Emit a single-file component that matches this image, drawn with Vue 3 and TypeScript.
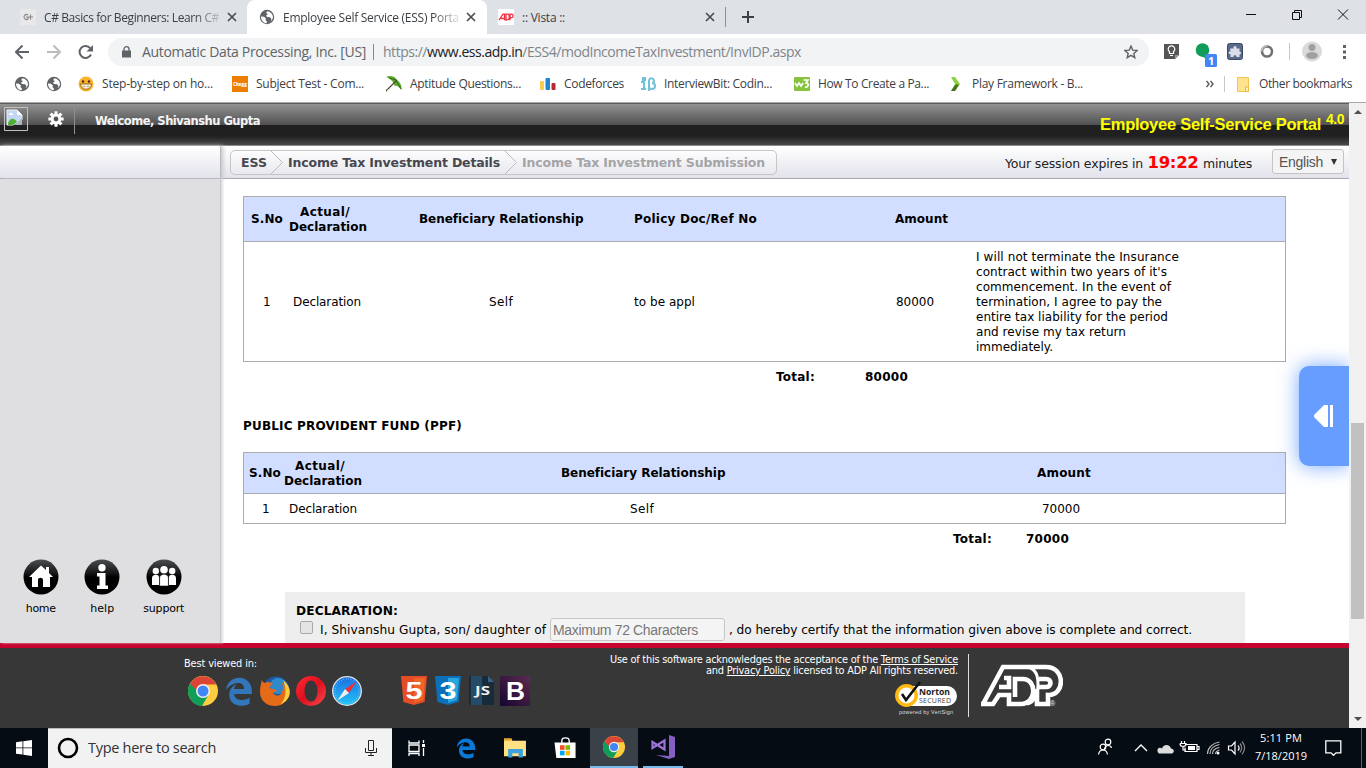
<script setup lang="ts">
import type { Directive } from 'vue'

// Tunes letter spacing so that a label occupies the given width in pixels.
const vFit: Directive<HTMLElement, number> = {
  mounted(el, { value }) {
    const count = (el.textContent ?? '').trim().length
    const natural = el.getBoundingClientRect().width
    if (count > 0) el.style.letterSpacing = `${((value - natural) / count).toFixed(3)}px`
  },
}

interface Cell { text: string; width: number }
interface Bookmark { name: string; icon: string; width: number; short?: boolean }

const bookmarks: Bookmark[] = [
  { name: 'Step-by-step on ho...', icon: 'smile', width: 111 },
  { name: 'Subject Test - Com...', icon: 'chegg', width: 108 },
  { name: 'Aptitude Questions...', icon: 'umbrella', width: 111 },
  { name: 'Codeforces', icon: 'bars', width: 60, short: true },
  { name: 'InterviewBit: Codin...', icon: 'ib', width: 108 },
  { name: 'How To Create a Pa...', icon: 'w3', width: 111 },
  { name: 'Play Framework - B...', icon: 'play', width: 111 },
]

const insuranceRow: Cell[] = [
  { text: '1', width: 7 },
  { text: 'Declaration', width: 68 },
  { text: 'Self', width: 24 },
  { text: 'to be appl', width: 61 },
  { text: '80000', width: 38 },
]

const undertaking: Cell[] = [
  { text: 'I will not terminate the Insurance', width: 203 },
  { text: "contract within two years of it's", width: 191 },
  { text: 'commencement. In the event of', width: 195 },
  { text: 'termination, I agree to pay the', width: 186 },
  { text: 'entire tax liability for the period', width: 192 },
  { text: 'and revise my tax return', width: 150 },
  { text: 'immediately.', width: 77 },
]

const ppfRow: Cell[] = [
  { text: '1', width: 7 },
  { text: 'Declaration', width: 68 },
  { text: 'Self', width: 24 },
  { text: '70000', width: 38 },
]
</script>

<template>
  <div class="screen">
    <svg class="defs" width="0" height="0">
      <defs>
        <symbol id="globe" viewBox="0 0 16 16">
          <circle cx="8" cy="8" r="7.2" fill="#5f6368" />
          <path d="M2 7.5l3 .3 2 1.6-.6 1.6 1.4 1.2v2C4.500 14 2 11.500 2 7.500zM8.200 2.200l-1 1.800 1.800 1.300-2 1.300 1 1.400 3 .2 1.500 1.700-1 2.300c1.800-1.200 2.700-3 2.400-5-.4-2.500-2.700-4.700-5.700-5z" fill="#fff" />
        </symbol>
        <symbol id="cross" viewBox="0 0 10 10"><path d="M1 1l8 8M9 1l-8 8" stroke="#4a4d51" stroke-width="1.7" fill="none" /></symbol>
        <symbol id="chrome" viewBox="0 0 30 30">
          <circle cx="15" cy="15" r="15" fill="#ffcd40" />
          <path d="M15 15L2 7.500A15 15 0 0 0 14 30l7-12z" fill="#0f9d58" />
          <path d="M15 15H9L2 7.500A15 15 0 0 1 28.300 8.500H15z" fill="#db4437" />
          <circle cx="15" cy="15" r="7" fill="#f1f1f1" /><circle cx="15" cy="15" r="5.500" fill="#4285f4" />
        </symbol>
        <symbol id="edge" viewBox="2 1 20 21">
          <path d="M2.740 10.810C3.830-1.360 22.500-1.360 21.200 13.560H8.610C8.610 17.850 14.420 19.210 19.540 16.310V20.530C13.250 23.880 5 21.430 5 14.090C5 8.580 9.970 6.810 9.970 6.810C9.970 6.810 8.580 8.580 8.540 10.050H15.700C15.700 2.930 5.900 5.570 2.740 10.810Z" fill="currentColor" />
        </symbol>
        <linearGradient id="gloss" x1="0" y1="0" x2="0" y2="1"><stop offset="0" stop-color="#4b4f52" /><stop offset=".42" stop-color="#111" /><stop offset=".5" stop-color="#000" /></linearGradient>
        <linearGradient id="operaRed" x1="0" y1="0" x2="1" y2="1"><stop offset="0" stop-color="#ff2a36" /><stop offset=".5" stop-color="#e00f1d" /><stop offset="1" stop-color="#f24e4e" /></linearGradient>
        <linearGradient id="sky" x1="0" y1="0" x2="0" y2="1"><stop offset="0" stop-color="#1d6fe3" /><stop offset="1" stop-color="#20c4f5" /></linearGradient>
        <linearGradient id="plum" x1="0" y1="1" x2="1" y2="0"><stop offset="0" stop-color="#14062f" /><stop offset="1" stop-color="#5d2a52" /></linearGradient>
      </defs>
    </svg>

    <header class="tabs">
      <div class="tab first">
        <svg class="fav" viewBox="0 0 16 16"><path d="M0 0h16v16H0z" fill="#e8e8e8" /><path d="M8 6a2.500 2.500 0 1 0 0 4V8H6M8 8h5M10.500 5.500v5" stroke="#888" fill="none" stroke-width="1.100" /></svg>
        <span class="title"><span v-fit="175" class="t">C# Basics for Beginners: Learn C#</span></span>
        <svg class="x"><use href="#cross" /></svg>
      </div>
      <div class="tab active">
        <svg class="fav"><use href="#globe" /></svg>
        <span class="title"><span v-fit="176" class="t">Employee Self Service (ESS) Porta</span></span>
        <svg class="x"><use href="#cross" /></svg>
      </div>
      <div class="tab third">
        <svg class="fav" viewBox="0 0 16 16"><path d="M0 0h16v16H0z" fill="#fff" /><path d="M1 11.200l4-6h1.500v6M3 9.500h3M8 11.200V5.200h1.500c2.500 0 2.500 5.500 0 5.500zM12 11.200v-6h1.500c2.400 0 2 3.500 0 3.500h-1.500" stroke="#ed2f43" fill="none" stroke-width="1.300" /></svg>
        <span class="title plain"><span v-fit="43" class="t">:: Vista ::</span></span>
        <svg class="x"><use href="#cross" /></svg>
      </div>
      <svg class="plus" viewBox="0 0 12 12"><path d="M6 0v12M0 6h12" stroke="#3c4043" stroke-width="2" /></svg>
      <svg class="win" viewBox="0 0 104 12">
        <path d="M0 6.500h10M46.500 4.500h7v7h-7zM48.500 4.500v-2h7v7h-2M92 1.500l10 10M102 1.500l-10 10" fill="none" stroke="#111" />
      </svg>
    </header>

    <div class="toolbar">
      <svg class="nav" viewBox="0 0 80 16" fill="none" stroke-width="2">
        <path d="M14 8H1M7.500 1.500L1 8l6.500 6.500" stroke="#5f6368" />
        <path d="M32 8h13M38.500 1.500L45 8l-6.500 6.500" stroke="#babcbe" />
        <path d="M76 10.500a6 6 0 1 1-.5-6" stroke="#5f6368" /><path d="M78 1v6.500h-6.500z" fill="#5f6368" />
      </svg>
      <div class="omnibox">
        <svg class="lock" viewBox="0 0 9 12"><path d="M0 4.500h9v7H0z" fill="#5f6368" /><path d="M2 5V3a2.500 2.300 0 0 1 5 0v2" fill="none" stroke="#5f6368" stroke-width="1.300" /></svg>
        <span v-fit="224" class="t corp">Automatic Data Processing, Inc. [US]</span>
        <i class="bar"></i>
        <span v-fit="418" class="t url">https://<b>www.ess.adp.in</b>/ESS4/modIncomeTaxInvestment/InvIDP.aspx</span>
        <svg class="star" viewBox="0 0 14 14"><path d="M7 1l1.700 4.100 4.500.4-3.400 2.900 1 4.300L7 10.400l-3.800 2.300 1-4.300L.8 5.500l4.500-.4z" fill="none" stroke="#5f6368" stroke-width="1.400" /></svg>
      </div>
      <svg class="ext" viewBox="0 0 190 32">
        <path d="M1 8h15v11l-4 4H1z" fill="#555" /><path d="M16 19h-4v4z" fill="#999" /><path d="M6.500 17.500v-1.800a3.300 3.300 0 1 1 4 0v1.800z" fill="none" stroke="#fff" stroke-width="1.200" /><path d="M7 19.500h3" stroke="#fff" />
        <circle cx="39.500" cy="14" r="6.800" fill="#0f9d58" /><path d="M38 20h6v3z" fill="#0f9d58" /><rect x="42" y="18" width="12" height="13" rx="1.500" fill="#4285f4" /><text x="45" y="28.500" fill="#fff" font-family="Open Sans, sans-serif" font-size="11" font-weight="700">1</text>
        <rect x="64.500" y="7.500" width="15" height="16" rx="2" fill="#5b6988" stroke="#3b4868" /><path d="M67 12.500h3.500c-1-3.500 4-3.500 3 0H76.500v3c2 0 2 3 0 3V21h-3c.8-2.500-3.800-2.500-3 0H67.500v-3c-2.500.5-2.500-3 0-2.500z" fill="#d9dee8" />
        <circle cx="104" cy="15.500" r="5" fill="#fff" stroke="#707070" stroke-width="2.600" /><path d="M98.500 15.500a5.500 5.500 0 0 1 5.500-5.500" stroke="#bbb" stroke-width="2" fill="none" />
        <path d="M126.500 7v17" stroke="#c5c7ca" />
        <circle cx="149" cy="15.500" r="10" fill="#dadada" /><circle cx="149" cy="11.500" r="3.500" fill="#a0a0a0" /><ellipse cx="149" cy="19.500" rx="6" ry="3.500" fill="#a0a0a0" />
        <path d="M180 9h3v3h-3zM180 14.500h3v3h-3zM180 20h3v3h-3z" fill="#5f6368" />
      </svg>
    </div>

    <nav class="bookmarks">
      <svg class="b16"><use href="#globe" /></svg>
      <svg class="b16 second"><use href="#globe" /></svg>
      <div v-for="b in bookmarks" :key="b.name" class="bm" :class="{ short: b.short }">
        <svg class="b16" viewBox="0 0 16 16">
          <g v-if="b.icon === 'smile'"><circle cx="8" cy="8" r="7.500" fill="#f9b428" /><circle cx="5" cy="5.500" r="1.200" fill="#523" /><circle cx="11" cy="5.500" r="1.200" fill="#523" /><path d="M2.500 8h11c0 7-11 7-11 0z" fill="#fff" stroke="#9a6713" /><path d="M3 10.500h10M6 8v5M10 8v5" stroke="#c8a05a" stroke-width=".6" /></g>
          <g v-else-if="b.icon === 'chegg'"><path d="M0 0h16v16H0z" fill="#ef7d00" /><text x="1" y="9.700" textLength="14" lengthAdjust="spacingAndGlyphs" fill="#fff" font-family="Open Sans, sans-serif" font-size="4.700" font-weight="800">Chegg</text></g>
          <g v-else-if="b.icon === 'umbrella'"><path d="M0 1c4-2 9-1 11 3 3 2 5 5 4.500 10-3-4-5-5-7-4C8 6 5 3 0 1z" fill="#60a82b" /><path d="M11 4L2 13c-2 1-2 2-1 2" stroke="#4a4a32" stroke-width="1.200" fill="none" /><path d="M3 2l7 2 5 9" stroke="#2d6a1e" fill="none" /></g>
          <g v-else-if="b.icon === 'bars'"><rect y="5" width="4" height="9" rx="1" fill="#f9ca54" /><rect x="5.500" y="2" width="4.500" height="12" rx="1" fill="#2185d0" /><rect x="11.500" y="7" width="4" height="7" rx="1" fill="#b52b32" /></g>
          <g v-else-if="b.icon === 'ib'"><path d="M1 6h3v7M1 13h5M3 2h2v2H3zM9 15V5c0-4 5-3 5 0 0 2-2 2-2 2 4 0 4 6 0 6-2 0-3-1-3-2" fill="none" stroke="#72c2d7" stroke-width="2" /></g>
          <g v-else-if="b.icon === 'w3'"><rect y="1" width="16" height="14" rx="1" fill="#86c440" /><path d="M1 7l2 3 2-3 2 3 2-3M9.500 4H14l-2 3c4 0 2 5-1 4" fill="none" stroke="#fff" stroke-width="1.600" /></g>
          <g v-else><path d="M3 1h4l5 7-5 7H3l4-7z" fill="#8dd141" /><path d="M7.500 8.500H11L7 15H3z" fill="#477226" /></g>
        </svg>
        <span v-fit="b.width" class="t">{{ b.name }}</span>
      </div>
      <svg class="more" viewBox="0 0 10 8"><path d="M1.500 1L4 4 1.500 7M5.500 1L8 4 5.500 7" fill="none" stroke="#55595e" stroke-width="1.400" /></svg>
      <i class="split"></i>
      <svg class="folder" viewBox="0 0 12 15"><path d="M.5 .5H11.500v14H.5z" fill="#ffe38e" stroke="#f0c756" /><path d="M8.500 14.500V10h3v4.500z" fill="#fff1bd" stroke="#e9b93c" /></svg>
      <span v-fit="93" class="t">Other bookmarks</span>
    </nav>

    <main class="page">
      <div class="viewport">
        <div class="masthead">
          <svg class="broken" viewBox="0 0 24 24"><path d="M.5 .5h23v23H.5z" fill="none" stroke="#c0c0c0" /><path d="M3 3h10l5 5v5l-9 5H3z" fill="#c4d7f5" stroke="#f0f0f0" /><path d="M4 16c2-5 6-6 9-1l-4 3H4z" fill="#4faf36" /><path d="M5 8c0-3 4-3 4 0" fill="#fff" /><path d="M13 3v5h5z" fill="#fff" /><path d="M18 11v7h-7z" fill="#aeb4be" /></svg>
          <svg class="gear" viewBox="0 0 24 24"><g stroke="#fff" stroke-width="4.600"><path d="M12 .5v23M.5 12h23M3.900 3.900l16.200 16.200M20.100 3.900L3.900 20.100" /></g><circle cx="12" cy="12" r="7.800" fill="#fff" /><circle cx="12" cy="12" r="3.600" fill="#555" /></svg>
          <i class="rule"></i>
          <span v-fit="165" class="t welcome">Welcome, Shivanshu Gupta</span>
          <span class="brand"><span v-fit="221" class="t">Employee Self-Service Portal</span><span v-fit="18" class="t ver">4.0</span></span>
        </div>

        <div class="subbar">
          <div class="subleft"></div>
          <div class="crumbs">
            <span v-fit="26" class="t ess">ESS</span>
            <svg class="arrow a1" viewBox="0 0 12 23"><path d="M0 0l11.500 11.500L0 23" fill="none" stroke="#b9bbc0" /></svg>
            <span v-fit="212" class="t">Income Tax Investment Details</span>
            <svg class="arrow a2" viewBox="0 0 12 23"><path d="M0 0l11.500 11.500L0 23" fill="none" stroke="#b9bbc0" /></svg>
            <span v-fit="243" class="t dim">Income Tax Investment Submission</span>
          </div>
          <div class="session">
            <span v-fit="138" class="t">Your session expires in</span>
            <span v-fit="51" class="t clock">19:22</span>
            <span v-fit="49" class="t">minutes</span>
          </div>
          <div class="lang"><span v-fit="44" class="t">English</span><i></i></div>
        </div>

        <div class="body">
          <aside class="side">
            <a class="tool"><svg viewBox="0 0 36 36"><circle cx="18" cy="18" r="17.500" fill="url(#gloss)" /><path d="M18 6.500L6 18h3v10h6v-7c0-3 5-3 5 0v7h7V18h3l-4-4V8h-3v3z" fill="#fff" /></svg><span v-fit="30" class="t">home</span></a>
            <a class="tool"><svg viewBox="0 0 36 36"><circle cx="18" cy="18" r="17.500" fill="url(#gloss)" /><circle cx="18" cy="8.700" r="3.700" fill="#fff" /><path d="M13 14h8.500v12.500H24V30H13v-3.500h2.500v-9H13z" fill="#fff" /></svg><span v-fit="24" class="t">help</span></a>
            <a class="tool"><svg viewBox="0 0 36 36"><circle cx="18" cy="18" r="17.500" fill="url(#gloss)" /><circle cx="9.800" cy="12" r="3.200" fill="#fff" /><circle cx="26.200" cy="12" r="3.200" fill="#fff" /><path d="M6 26V19c0-4 7-4 7-1v8zM23 26v-8c0-3 7-3 7 1v7z" fill="#fff" /><circle cx="18" cy="10.800" r="3.800" fill="#fff" /><path d="M13.600 27v-8c0-5 8.800-5 8.800 0v8z" fill="#fff" stroke="#111" stroke-width=".6" /></svg><span v-fit="41" class="t">support</span></a>
          </aside>

          <section class="content">
            <div class="grid insurance">
              <div class="row head">
                <span v-fit="32" class="t">S.No</span>
                <span class="pair"><span v-fit="50" class="t upper">Actual/</span><span v-fit="78" class="t">Declaration</span></span>
                <span v-fit="164" class="t">Beneficiary Relationship</span>
                <span v-fit="123" class="t">Policy Doc/Ref No</span>
                <span v-fit="53" class="t">Amount</span>
              </div>
              <div class="row data">
                <span v-for="c in insuranceRow" :key="c.text" v-fit="c.width" class="t">{{ c.text }}</span>
                <p class="undertaking"><span v-for="l in undertaking" :key="l.text" v-fit="l.width" class="t">{{ l.text }}</span></p>
              </div>
            </div>
            <div class="total one"><span v-fit="39" class="t">Total:</span><span v-fit="43" class="t">80000</span></div>
            <h2><span v-fit="219" class="t">PUBLIC PROVIDENT FUND (PPF)</span></h2>
            <div class="grid ppf">
              <div class="row head">
                <span v-fit="32" class="t">S.No</span>
                <span class="pair"><span v-fit="50" class="t upper">Actual/</span><span v-fit="78" class="t">Declaration</span></span>
                <span v-fit="164" class="t">Beneficiary Relationship</span>
                <span v-fit="54" class="t">Amount</span>
              </div>
              <div class="row data">
                <span v-for="c in ppfRow" :key="c.text" v-fit="c.width" class="t">{{ c.text }}</span>
              </div>
            </div>
            <div class="total two"><span v-fit="39" class="t">Total:</span><span v-fit="43" class="t">70000</span></div>
            <div class="declare">
              <b v-fit="102" class="t">DECLARATION:</b>
              <div class="line">
                <i class="check"></i>
                <span v-fit="226" class="t">I, Shivanshu Gupta, son/ daughter of</span>
                <span class="field"><span v-fit="145" class="t">Maximum 72 Characters</span></span>
                <span v-fit="463" class="t">, do hereby certify that the information given above is complete and correct.</span>
              </div>
            </div>
          </section>
          <div class="pull"><svg viewBox="0 0 20 22"><path d="M10 0h4v22h-4L0 12v-2z M16 0h3v22h-3z" fill="#fff" /></svg></div>
        </div>

        <footer class="foot">
          <div class="viewed">
            <span v-fit="73" class="t">Best viewed in:</span>
            <div class="logos">
              <svg viewBox="0 0 30 30"><use href="#chrome" /></svg>
              <svg viewBox="0 0 30 30" class="blue"><use href="#edge" x="1" width="28" height="30" /></svg>
              <svg viewBox="0 0 30 30"><circle cx="16" cy="14" r="13.500" fill="#1d5aa5" /><circle cx="18" cy="10" r="8" fill="#38a4df" opacity=".65" /><path d="M2 3c0 3 1 3 3 4 3-2 5 0 8 0-1 2-4 3-3 5 2 2 5 0 7 3-1 1-3 0-4 2 3 4 8 3 9-1 2-4 1-7-1-10 5 3 6 7 6 12 0 8-5 12-12 12C6 30 0 24 0 16 0 11 1 8 2 3z" fill="#e66b19" /><path d="M23 4c8 6 9 15 3 21l-6 4c5-5 8-14 3-25z" fill="#ffcf3e" /></svg>
              <svg viewBox="0 0 30 30"><path d="M15 0a15 15 0 1 0 0 30 15 15 0 0 0 0-30zm0 4.500c4 0 6.500 5 6.500 10.500S19 25.500 15 25.500 8.500 20.500 8.500 15 11 4.500 15 4.500z" fill="url(#operaRed)" /></svg>
              <svg viewBox="0 0 30 30"><circle cx="15" cy="15" r="14.300" fill="url(#sky)" stroke="#dfe3e7" stroke-width="1.300" /><circle cx="15" cy="15" r="12" fill="none" stroke="#a8dbff" stroke-dasharray=".7 1.800" /><path d="M24.500 5.500L13 13l4 4z" fill="#f02f36" /><path d="M5.500 24.500L13 13l4 4z" fill="#eee" /></svg>
              <svg viewBox="0 0 26 30" class="narrow gap"><path d="M0 0h26l-2.400 26L13 29 2.400 26z" fill="#e44d26" /><path d="M13 2h11l-2 22-9 3z" fill="#f16529" /><text x="4.500" y="23" textLength="17" lengthAdjust="spacingAndGlyphs" font-family="Liberation Sans, sans-serif" font-size="24" font-weight="700" fill="#fff">5</text></svg>
              <svg viewBox="0 0 26 30" class="narrow"><path d="M0 0h26l-2.400 26L13 29 2.400 26z" fill="#0b70b8" /><path d="M13 2h11l-2 22-9 3z" fill="#29a6dd" /><text x="4.500" y="23" textLength="17" lengthAdjust="spacingAndGlyphs" font-family="Liberation Sans, sans-serif" font-size="24" font-weight="700" fill="#fff">3</text></svg>
              <svg viewBox="0 0 25 30" class="js"><path d="M0 0h19l6 6v23H0z" fill="#182b3b" /><path d="M2 0h11v29H2z" fill="#264b66" /><path d="M19 0v6h6z" fill="#376489" /><text x="6" y="18.500" textLength="15" lengthAdjust="spacingAndGlyphs" font-family="Open Sans, sans-serif" font-size="13" font-weight="700" fill="#eee">JS</text></svg>
              <svg viewBox="0 0 30 30" class="boot"><rect width="30" height="30" rx="1.500" fill="url(#plum)" /><text x="6" y="24" textLength="19" lengthAdjust="spacingAndGlyphs" font-family="Liberation Sans, sans-serif" font-size="26" font-weight="700" fill="#fff">B</text></svg>
            </div>
          </div>
          <div class="legal">
            <span v-fit="348" class="t">Use of this software acknowledges the acceptance of the <u>Terms of Service</u></span>
            <span v-fit="252" class="t">and <u>Privacy Policy</u> licensed to ADP All rights reserved.</span>
            <svg class="norton" viewBox="0 0 62 34"><rect x="4" y="5" width="58" height="20" rx="10" fill="#fff" /><circle cx="11.500" cy="14.500" r="9.700" fill="#fff" stroke="#fdb813" stroke-width="3.500" /><path d="M7 13l4 6L25 1" fill="none" stroke="#111" stroke-width="2.600" /><text x="24" y="14" textLength="31" lengthAdjust="spacingAndGlyphs" font-family="Open Sans, sans-serif" font-size="9.500" font-weight="700" fill="#222">Norton</text><text x="24" y="22" textLength="32" font-family="Open Sans, sans-serif" font-size="7" fill="#444">SECURED</text><text x="4" y="33" textLength="54" font-family="Liberation Sans, sans-serif" font-size="5.500" fill="#ddd">powered by VeriSign</text></svg>
          </div>
          <i class="divider"></i>
          <svg class="adp" viewBox="0 0 84 44">
            <g fill="none" stroke="#fff" stroke-width="4.600" stroke-linejoin="miter">
              <path d="M2 40H14L20 31H30V40H42C58 40 58 15 44 15H36V33M4 40L24 3H67C87 3 86 32 69 31V40H58V25M20 23H30V14H25M60 15H67C73 15 73 23 67 23H60" />
              <path d="M46 3C55 3 59 9 59 20C59 33 54 39 48 40" stroke-width="3" />
            </g>
            <text x="71" y="42" fill="#fff" font-family="Liberation Sans, sans-serif" font-size="7">®</text>
          </svg>
        </footer>
      </div>
      <div class="scroll"><i class="up"></i><i class="thumb"></i><i class="down"></i></div>
    </main>

    <div class="taskbar">
      <div class="start"><svg viewBox="0 0 16 16"><path d="M0 2.300L6.500 1.300v6.200H0zM7.300 1.200L16 0v7.500H7.300zM0 8.300h6.500v6.300L0 13.700zM7.300 8.300H16V16l-8.700-1.300z" fill="#fff" /></svg></div>
      <div class="search">
        <svg class="ring" viewBox="0 0 22 22"><circle cx="11" cy="11" r="9" fill="none" stroke="#000" stroke-width="2.600" /></svg>
        <span v-fit="128" class="t">Type here to search</span>
        <svg class="mic" viewBox="0 0 12 16"><path d="M3.500 .5h5v10h-5zM.5 8v4.500h11V8M6 12.500V16M3 15.500h6" fill="none" stroke="#222" /></svg>
      </div>
      <div class="app"><svg viewBox="0 0 18 18"><path d="M1 1.500V4h10V1.500M1 6h10v6.500H1zM1 17v-2.500h10V17" fill="none" stroke="#fff" stroke-width="1.300" /><path d="M15.500 1v3M15.500 9v8" stroke="#fff" stroke-width="1.300" /><path d="M14 5h3v3h-3z" fill="#fff" /></svg></div>
      <div class="app edge"><svg viewBox="0 0 20 22"><use href="#edge" width="20" height="22" /></svg></div>
      <div class="app"><svg viewBox="0 0 22 20" class="wide"><path d="M0 1h7l1 2h13v15H0z" fill="#ffe082" /><path d="M0 1h7v2H0z" fill="#e9a722" /><path d="M4 19v-8h14v8h-4v-4H8v4z" fill="#3aa0df" /></svg></div>
      <div class="app"><svg viewBox="0 0 24 24" class="wide"><path d="M8 7V4c0-4 8-4 8 0v3" fill="none" stroke="#fff" stroke-width="1.500" /><path d="M0 6h23v17H2z" fill="#fff" /><path d="M6 9h5v5H6z" fill="#f25022" /><path d="M12 9h5v5h-5z" fill="#7fba00" /><path d="M6 15h5v5H6z" fill="#00a4ef" /><path d="M12 15h5v5h-5z" fill="#ffb900" /></svg></div>
      <div class="app open"><svg viewBox="0 0 30 30"><use href="#chrome" /></svg></div>
      <div class="app vs"><svg viewBox="0 0 24 24" class="wide"><path d="M18 0l6 2v20l-6 2L5 20l13 1z" fill="#865fc5" /><path d="M1.500 7l12 7.500v-9L1.500 13z" fill="none" stroke="#9b72d8" stroke-width="2.200" /></svg></div>
      <svg class="tray" viewBox="0 0 150 24" fill="none" stroke="#fff" stroke-width="1.200">
        <circle cx="11" cy="6" r="2.800" /><path d="M7.500 13c1-5 6.500-4 7-1" /><circle cx="6" cy="11" r="2.800" /><path d="M1.500 18.500c1-6 8-6 9 0" />
        <path d="M38 15l6-6 6 6" stroke-width="1.400" />
        <path d="M61 16.500c-2-4 2-6 4-4 2-5 8-4 9 0 3 0 4 4 1 5H62z" fill="#ddd" stroke="none" />
        <path d="M89 8.500h11v7H88v-4M100 10.500h2v3h-2M84.500 5v3M87.500 5v3M83 7.500h6c0 4-6 4-6 0M86 10v4h3" /><path d="M91 10h7v4h-7z" fill="#fff" stroke="none" />
        <path d="M110.500 18c0-6 5-11 12-12M113 18c0-5 4-8.500 9.500-9.500M115.500 18c0-3.500 3-6 7-6.500M118.500 18c0-2 2-3.500 4-4" stroke="#bbb" /><circle cx="121" cy="17" r="1.500" fill="#fff" stroke="none" />
        <path d="M131.500 10h3l3.500-4v12l-3.500-4h-3z" /><path d="M141 9.500c1.500 2 1 4 0 5" /><path d="M143 7.500c2.500 3 2 6 0 9M145 5.500c3.500 4 3 9 0 13" stroke="#888" />
      </svg>
      <div class="clockbox"><span v-fit="42" class="t">5:11 PM</span><span v-fit="52" class="t">7/18/2019</span></div>
      <svg class="note" viewBox="0 0 17 16"><path d="M.8 .8h15v12H11l-2.500 2.500L6 12.800H.8z" fill="none" stroke="#fff" stroke-width="1.300" /></svg>
      <i class="peek"></i>
    </div>
  </div>
</template>

<style scoped>
* { box-sizing: border-box; }
svg { display: block; flex: none; }
.defs { position: absolute; }
.screen { width: 1366px; height: 768px; overflow: hidden; background: #fff; display: flex; flex-direction: column; font-family: "DejaVu Sans", sans-serif; font-size: 12px; color: #000; }
.t { display: inline-block; white-space: nowrap; flex: none; justify-self: start; }
.tabs, .toolbar, .bookmarks, .taskbar { font-family: "Open Sans", sans-serif; flex: none; display: flex; align-items: center; }

.tabs { height: 34px; background: #dee1e6; color: #3c4043; }
.tab { height: 34px; display: flex; align-items: center; flex: none; }
.first { width: 247px; padding-left: 20px; }
.active { width: 240px; padding-left: 12px; background: #fff; border-radius: 8px 8px 0 0; }
.third { width: 239px; padding-left: 11px; }
.third::after { content: ""; width: 1px; height: 20px; background: #8d9094; margin-left: 10px; }
.fav { width: 16px; height: 16px; }
.title { width: 176px; margin-left: 8px; overflow: hidden; -webkit-mask-image: linear-gradient(90deg, #000 85%, rgba(0,0,0,.15)); }
.plain { -webkit-mask-image: none; }
.x { width: 10px; height: 10px; margin-left: 7px; }
.plus { width: 12px; height: 12px; margin-left: 16px; }
.win { width: 104px; height: 12px; margin-left: 492px; margin-top: -6px; }

.toolbar { height: 35px; }
.nav { width: 80px; height: 16px; margin-left: 15px; }
.omnibox { width: 1041px; height: 28px; border-radius: 14px; background: #f1f3f4; margin-left: 13px; display: flex; align-items: center; padding-left: 14px; font-size: 14px; }
.lock { width: 9px; height: 12px; }
.corp { margin-left: 11px; color: #5f6368; }
.bar { width: 1px; height: 16px; background: #85888c; margin: 0 9px 0 7px; }
.url { color: #80858a; }
.url b { font-weight: 400; color: #202124; }
.star { width: 14px; height: 14px; margin-left: 323px; }
.ext { width: 190px; height: 32px; margin-left: 14px; }

.bookmarks { height: 33px; padding-bottom: 3px; color: #3c4043; }
.b16 { width: 16px; height: 16px; }
.bookmarks > .b16 { margin-left: 14px; }
.bookmarks > .second { margin-left: 16px; margin-right: 16px; }
.bm { width: 154px; display: flex; gap: 8px; align-items: center; flex: none; }
.bm .t, .bookmarks > .t { margin-top: -1px; }
.short { width: 100px; }
.more { width: 10px; height: 8px; margin-left: 103px; }
.split { width: 1px; height: 16px; margin-left: 9px; background: #c5c7ca; flex: none; }
.folder { width: 12px; height: 15px; margin: 0 10px 0 12px; }

.page { height: 626px; flex: none; display: flex; border-top: 1px solid #a9a9a9; }
.viewport { width: 1349px; height: 625px; display: flex; flex-direction: column; }
.masthead { height: 43px; flex: none; border-top: 1px solid #5c5c5c; border-bottom: 1px solid #8a8a8a; background: linear-gradient(#929292 0, #505050 21px, #202020 21px, #202020 32px, #4a4a4a 41px); display: flex; align-items: flex-start; color: #f4f4f4; }
.broken { width: 24px; height: 24px; margin: 3px 0 0 4px; }
.gear { width: 16px; height: 16px; margin: 7px 0 0 20px; }
.rule { width: 1px; height: 27px; margin: 3px 0 0 10px; background: #8f8f8f; }
.welcome { font-weight: 700; font-size: 11.5px; margin: 10px 0 0 20px; }
.brand { font: 700 16.5px "Liberation Sans", sans-serif; color: #ff0; margin-left: auto; margin-right: 4px; display: flex; gap: 5px; width: 245px; padding-top: 11px; }
.ver { font-size: 14px; margin-top: -4px; }

.subbar { height: 33px; flex: none; display: flex; align-items: flex-start; background: linear-gradient(#fff, #e2e3ea); border-bottom: 1px solid #a7a9b5; font-size: 12.5px; }
.subleft { width: 221px; height: 33px; flex: none; box-shadow: 2px 0 4px #c4c5ca; border-right: 1px solid #b8b9bd; }
.crumbs { width: 547px; height: 25px; margin: 4px 0 0 9px; border: 1px solid #c5c6ca; border-radius: 5px; display: flex; align-items: center; color: #47484f; font-weight: 700; flex: none; background: linear-gradient(#fdfdfe, #e8e8ee); }
.ess { margin-left: 10px; }
.arrow { width: 12px; height: 23px; margin: 0 5px 0 4px; }
.a2 { margin: 0 5px 0 5px; }
.dim { color: #a5a5a7; }
.session { width: 247px; height: 33px; margin-left: 228px; display: flex; align-items: center; justify-content: space-between; color: #222; }
.session .t:not(.clock) { padding-top: 1px; }
.clock { color: #f00; font-weight: 700; font-size: 16.5px; }
.lang { width: 72px; height: 25px; margin: 3px 0 0 20px; border: 1px solid #c4c4c4; border-radius: 3px; background: #f4f4f4; display: flex; align-items: center; padding-left: 6px; gap: 8px; color: #555; font: 14px "Liberation Sans", sans-serif; }
.lang i { border: 3.5px solid transparent; border-top: 6px solid #333; border-bottom: 0; }

.body { position: relative; height: 464px; flex: none; display: flex; }
.side { width: 221px; background: #dfdfe1; border-right: 1px solid #c9c9cb; box-shadow: 2px 0 2px #ddd; padding: 380px 0 0 10px; display: flex; align-items: flex-start; flex: none; }
.tool { width: 61.500px; display: flex; flex-direction: column; align-items: center; gap: 7px; font-size: 11px; }
.tool svg { width: 36px; height: 36px; }
.content { width: 1128px; padding: 17px 0 0 22px; overflow: hidden; }
.grid { width: 1043px; border: 1px solid #aaabad; }
.row { display: grid; align-items: center; }
.head { font-weight: 700; background: #d2deff; border-bottom: 1px solid #aaabad; font-size: 12px; }
.pair { display: flex; flex-direction: column; align-items: center; width: 78px; padding-top: 1px; }
.upper { margin-right: 6px; }
.head .t, .undertaking .t { line-height: 15px; }
.data { font-size: 12px; }
.insurance { height: 166px; }
.insurance .head { height: 45px; grid-template-columns: 38px 130px 215px 261px 100px; padding-left: 7px; }
.insurance .data { height: 119px; grid-template-columns: 30px 196px 145px 262px 80px 210px; padding-left: 19px; }
.undertaking { margin: 0; padding-top: 2px; display: flex; flex-direction: column; align-items: flex-start; }
.total { display: flex; font-weight: 700; font-size: 12px; height: 30px; align-items: center; }
.one { padding-left: 533px; gap: 50px; }
.two { padding-left: 710px; gap: 34px; }
h2 { margin: 26px 0 0; height: 34px; font-size: 12px; line-height: 16px; }
.ppf { height: 72px; }
.ppf .head { height: 41px; grid-template-columns: 35px 277px 476px 60px; padding-left: 5px; }
.ppf .data { height: 29px; grid-template-columns: 27px 341px 412px 60px; padding-left: 18px; }
.declare { width: 960px; height: 70px; margin: 38px 0 0 42px; background: #eee; padding: 12px 11px 0; font-size: 12.200px; }
.declare b { line-height: 15px; display: block; width: max-content; }
.line { display: flex; align-items: center; height: 23px; margin-top: -1px; }
.check { width: 13px; height: 13px; margin: -5px 7px 0 4px; border: 1px solid #aaa; border-radius: 2px; background: #e4e4e4; flex: none; }
.field { width: 175px; height: 23px; margin: 0 4px; border: 1px solid #c6c6c6; border-radius: 3px; background: #f4f4f4; color: #777; font: 14px "Liberation Sans", sans-serif; display: flex; align-items: center; padding-left: 2px; flex: none; }
.pull { position: absolute; right: 0; top: 187px; width: 50px; height: 100px; border-radius: 10px 0 0 10px; background: #679dff; box-shadow: 0 0 20px rgba(80,145,255,.8); display: flex; align-items: center; padding-left: 15px; clip-path: inset(-40px 0 -40px -40px); }
.pull svg { width: 20px; height: 22px; }

.foot { height: 85px; border-top: 5px solid #c4032f; background: #373737; color: #fff; display: flex; flex: none; font-size: 9.800px; }
.viewed { width: 350px; margin-left: 184px; padding-top: 10px; }
.viewed > .t { display: block; width: max-content; line-height: 12px; }
.logos { display: flex; gap: 6px; padding: 6px 0 0 4px; }
.logos svg { width: 30px; height: 30px; }
.logos .blue { color: #3277bc; }
.logos .narrow { width: 26px; margin-right: 2px; }
.logos .gap { margin-left: 33px; }
.logos .js { width: 25px; }
.legal { width: 424px; height: 80px; padding-top: 6px; display: flex; flex-direction: column; align-items: flex-end; line-height: 11px; }
.norton { width: 62px; height: 34px; margin: 5px 1px 0 0; }
.divider { width: 1px; height: 63px; margin: 6px 0 0 10px; background: #ddd; }
.adp { width: 84px; height: 44px; margin: 16px 0 0 10px; }

.scroll { width: 17px; background: #f1f1f1; display: flex; flex-direction: column; align-items: center; }
.up { margin-top: 7px; border: 4px solid transparent; border-bottom-color: #505050; border-top: 0; }
.thumb { width: 13px; height: 196px; margin-top: 309px; background: #c1c1c1; }
.down { margin-top: 98px; border: 4px solid transparent; border-top-color: #505050; border-bottom: 0; }

.taskbar { height: 40px; background: #060c14; color: #fff; }
.start { width: 48px; padding-left: 16px; }
.start svg { width: 16px; height: 16px; }
.search { width: 344px; height: 40px; background: #f2f2f2; border-top: 1px solid #bbb; display: flex; align-items: center; color: #333; font-size: 14.5px; padding: 0 0 1px 9px; }
.search .t { margin-top: -1px; }
.ring { width: 22px; height: 22px; margin-right: 9px; }
.mic { width: 12px; height: 16px; margin-left: 149px; }
.app { width: 49.500px; height: 40px; display: flex; align-items: center; justify-content: center; flex: none; }
.app svg { width: 18px; height: 18px; }
.app.edge svg, .app.open svg { width: 22px; height: 22px; }
.app .wide { width: 23px; height: 22px; }
.edge { color: #0a78d7; }
.open { width: 48px; background: #3b4149; border-bottom: 2px solid #76b9ed; }
.vs { width: 40px; margin-left: 5px; border-bottom: 2px solid #76b9ed; }
.vs .wide { width: 24px; height: 24px; }
.tray { width: 150px; height: 24px; margin-left: 414px; }
.clockbox { width: 54px; margin: -2px 0 0 7px; display: flex; flex-direction: column; align-items: center; font-size: 11px; line-height: 18px; }
.note { width: 17px; height: 16px; margin-left: 17px; }
.peek { width: 1px; height: 40px; margin-left: 19px; background: #596069; }
</style>

<style>
html, body { margin: 0; overflow: hidden; background: #fff; }
</style>
